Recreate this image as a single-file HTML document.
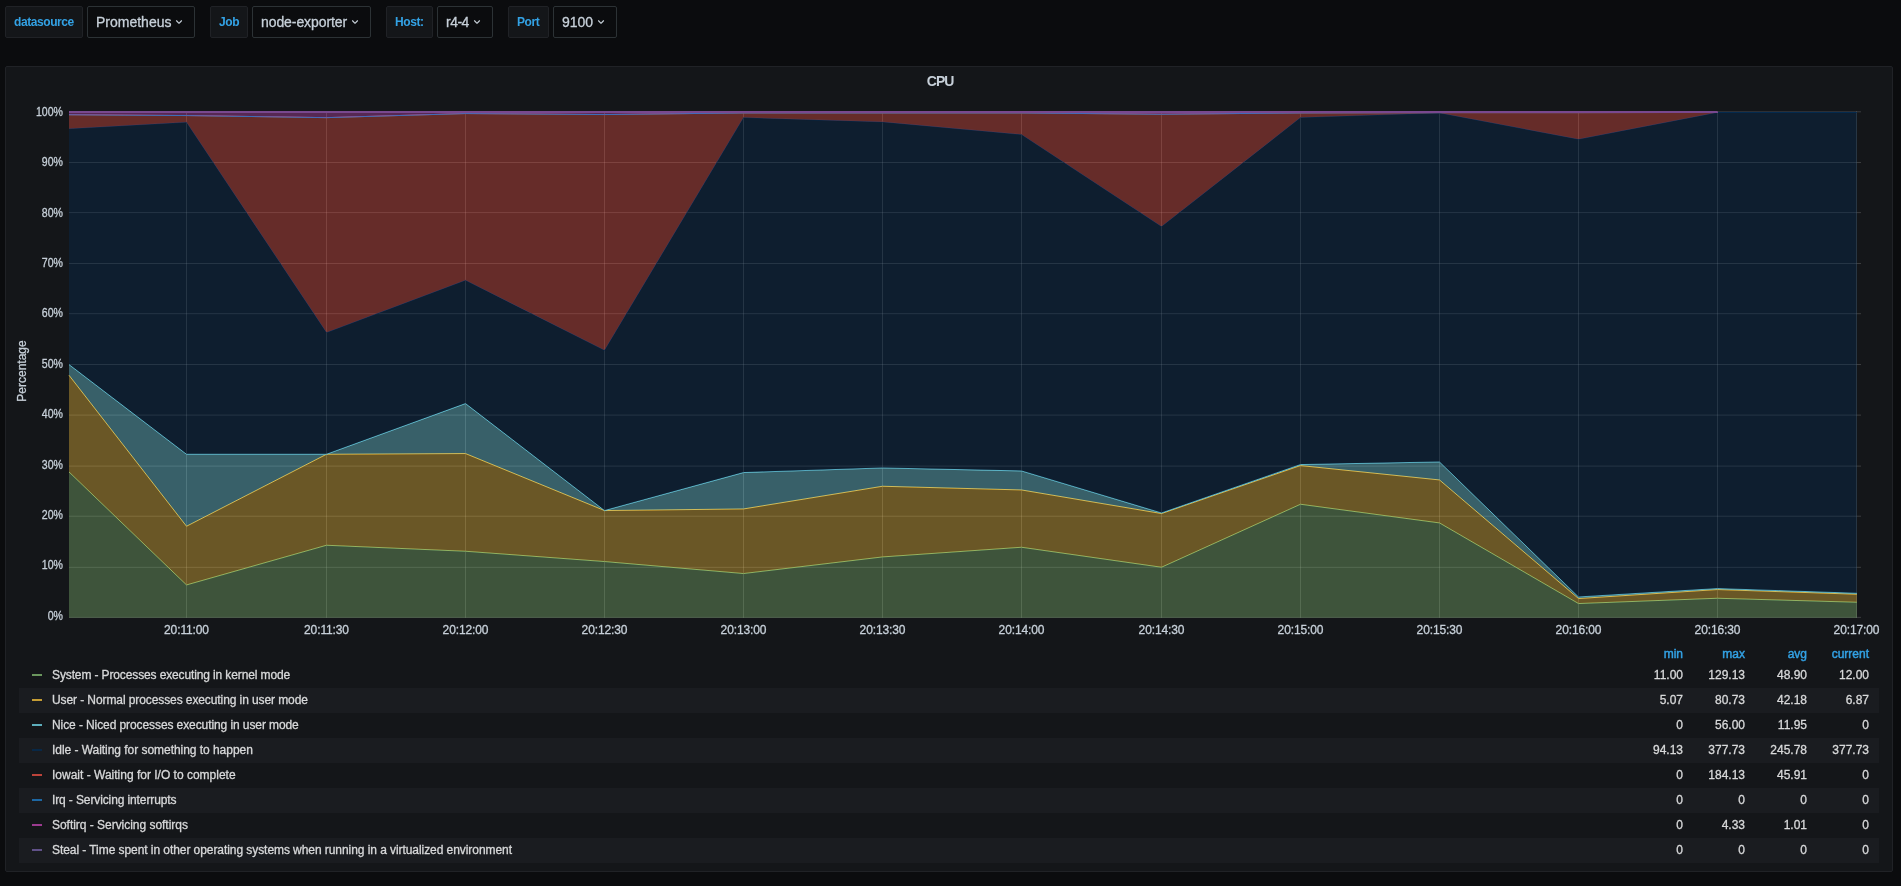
<!DOCTYPE html>
<html><head><meta charset="utf-8"><title>CPU</title>
<style>
*{box-sizing:border-box;margin:0;padding:0}
html,body{width:1901px;height:886px;overflow:hidden;background:#0b0c0e;font-family:"Liberation Sans",sans-serif;color:#c7d0d9}
body{position:relative}
.vlab,.vval{position:absolute;top:6px;height:32px;border-radius:2px;line-height:30px;white-space:nowrap}
.vlab{background:#141619;border:1px solid #202226;color:#33a2e5;font-size:12px;font-weight:bold;padding-left:8px;letter-spacing:-0.42px}
.vval{background:#0b0c0e;border:1px solid #2c3235;color:#c7d0d9;font-size:14px;padding-left:8px}
.vval svg{position:relative;top:1.8px;margin-left:1px}
.panel{position:absolute;left:5px;top:66px;width:1888px;height:806px;background:#141619;border:1px solid #202226;border-radius:2px}
.title{position:absolute;left:0;top:72px;width:1880px;text-align:center;font-size:14px;font-weight:bold;line-height:18px;color:#c7d0d9;letter-spacing:-1px;text-indent:0.3px}
.chart{position:absolute;left:0;top:0}
.yl{position:absolute;left:13px;width:50px;text-align:right;font-size:12px;line-height:16px;color:#c7d0d9;transform:scaleX(0.88);transform-origin:100% 50%}
.xl{position:absolute;top:621.5px;width:80px;text-align:center;font-size:12px;line-height:16px;color:#c7d0d9;letter-spacing:-0.12px}
.ylab{position:absolute;left:-28px;top:362.6px;width:100px;height:16px;text-align:center;font-size:12px;line-height:16px;transform:rotate(-90deg);color:#c7d0d9}
.lh{position:absolute;top:645.7px;-webkit-text-stroke:0.45px;width:80px;text-align:right;font-size:12px;line-height:16px;color:#33a2e5}
.lr{position:absolute;left:19px;width:1860px;height:25px;font-size:12px;line-height:25px;color:#d8d9da;white-space:nowrap}
.lr.stripe{background:#1a1c20}
.lr i{position:absolute;left:12.9px;top:11px;width:10.4px;height:2px;opacity:0.82}
.lr .ln{position:absolute;left:33px;top:-0.5px}
.lr .lv{position:absolute;top:-0.5px;width:80px;text-align:right}
.yl,.xl,.ylab,.lr,.vval span{-webkit-text-stroke:0.3px}
#w{position:absolute;left:0;top:0;width:1901px;height:886px;will-change:transform}
</style></head><body><div id="w">
<div class="vlab" style="left:5px;width:78px">datasource</div><div class="vval" style="left:87px;width:108px"><span style="letter-spacing:0px">Prometheus</span><svg width="14" height="14" viewBox="0 0 24 24"><path fill="#c7d0d9" d="M17,9.17a1,1,0,0,0-1.41,0L12,12.71,8.46,9.17a1,1,0,0,0-1.41,0,1,1,0,0,0,0,1.42l4.24,4.24a1,1,0,0,0,1.42,0L17,10.59A1,1,0,0,0,17,9.17Z"/></svg></div><div class="vlab" style="left:210px;width:38px">Job</div><div class="vval" style="left:252px;width:119px"><span style="letter-spacing:-0.08px">node-exporter</span><svg width="14" height="14" viewBox="0 0 24 24"><path fill="#c7d0d9" d="M17,9.17a1,1,0,0,0-1.41,0L12,12.71,8.46,9.17a1,1,0,0,0-1.41,0,1,1,0,0,0,0,1.42l4.24,4.24a1,1,0,0,0,1.42,0L17,10.59A1,1,0,0,0,17,9.17Z"/></svg></div><div class="vlab" style="left:386px;width:47px">Host:</div><div class="vval" style="left:437px;width:56px"><span style="letter-spacing:-0.5px">r4-4</span><svg width="14" height="14" viewBox="0 0 24 24"><path fill="#c7d0d9" d="M17,9.17a1,1,0,0,0-1.41,0L12,12.71,8.46,9.17a1,1,0,0,0-1.41,0,1,1,0,0,0,0,1.42l4.24,4.24a1,1,0,0,0,1.42,0L17,10.59A1,1,0,0,0,17,9.17Z"/></svg></div><div class="vlab" style="left:508px;width:41px">Port</div><div class="vval" style="left:553px;width:64px"><span style="letter-spacing:0px">9100</span><svg width="14" height="14" viewBox="0 0 24 24"><path fill="#c7d0d9" d="M17,9.17a1,1,0,0,0-1.41,0L12,12.71,8.46,9.17a1,1,0,0,0-1.41,0,1,1,0,0,0,0,1.42l4.24,4.24a1,1,0,0,0,1.42,0L17,10.59A1,1,0,0,0,17,9.17Z"/></svg></div>
<div class="panel"></div>
<div class="title">CPU</div>
<svg class="chart" width="1901" height="886" viewBox="0 0 1901 886"><g fill="#c8c8c8" fill-opacity="0.22"><rect x="186.0" y="111.3" width="1" height="506.5"/><rect x="326.0" y="111.3" width="1" height="506.5"/><rect x="465.0" y="111.3" width="1" height="506.5"/><rect x="604.0" y="111.3" width="1" height="506.5"/><rect x="743.0" y="111.3" width="1" height="506.5"/><rect x="882.0" y="111.3" width="1" height="506.5"/><rect x="1021.0" y="111.3" width="1" height="506.5"/><rect x="1161.0" y="111.3" width="1" height="506.5"/><rect x="1300.0" y="111.3" width="1" height="506.5"/><rect x="1439.0" y="111.3" width="1" height="506.5"/><rect x="1578.0" y="111.3" width="1" height="506.5"/><rect x="1717.0" y="111.3" width="1" height="506.5"/><rect x="1856.0" y="111.3" width="1" height="506.5"/><rect x="69" y="111.30" width="1792" height="1"/><rect x="69" y="162.00" width="1792" height="1"/><rect x="69" y="212.10" width="1792" height="1"/><rect x="69" y="263.00" width="1792" height="1"/><rect x="69" y="313.20" width="1792" height="1"/><rect x="69" y="364.00" width="1792" height="1"/><rect x="69" y="414.60" width="1792" height="1"/><rect x="69" y="465.60" width="1792" height="1"/><rect x="69" y="515.70" width="1792" height="1"/><rect x="69" y="566.80" width="1792" height="1"/><rect x="69" y="616.85" width="1792" height="1"/></g>
<polygon points="69.0,471.95 186.5,584.95 326.5,545.25 465.5,551.25 604.5,561.55 743.5,573.55 882.5,556.95 1021.5,547.25 1161.5,567.25 1300.5,504.25 1439.5,522.95 1578.5,603.55 1717.5,598.25 1856.9,602.25 1856.9,617.70 1717.5,617.70 1578.5,617.70 1439.5,617.70 1300.5,617.70 1161.5,617.70 1021.5,617.70 882.5,617.70 743.5,617.70 604.5,617.70 465.5,617.70 326.5,617.70 186.5,617.70 69.0,617.70" fill="#7EB26D" fill-opacity="0.4"/>
<polyline points="69.0,471.95 186.5,584.95 326.5,545.25 465.5,551.25 604.5,561.55 743.5,573.55 882.5,556.95 1021.5,547.25 1161.5,567.25 1300.5,504.25 1439.5,522.95 1578.5,603.55 1717.5,598.25 1856.9,602.25" fill="none" stroke="#7EB26D" stroke-width="1" stroke-linejoin="round"/>
<polygon points="69.0,375.25 186.5,526.25 326.5,454.25 465.5,453.55 604.5,510.55 743.5,508.95 882.5,486.25 1021.5,489.95 1161.5,513.55 1300.5,465.55 1439.5,479.95 1578.5,598.55 1717.5,589.55 1856.9,594.25 1856.9,602.25 1717.5,598.25 1578.5,603.55 1439.5,522.95 1300.5,504.25 1161.5,567.25 1021.5,547.25 882.5,556.95 743.5,573.55 604.5,561.55 465.5,551.25 326.5,545.25 186.5,584.95 69.0,471.95" fill="#EAB839" fill-opacity="0.4"/>
<polyline points="69.0,375.25 186.5,526.25 326.5,454.25 465.5,453.55 604.5,510.55 743.5,508.95 882.5,486.25 1021.5,489.95 1161.5,513.55 1300.5,465.55 1439.5,479.95 1578.5,598.55 1717.5,589.55 1856.9,594.25" fill="none" stroke="#EAB839" stroke-width="1" stroke-linejoin="round"/>
<polygon points="69.0,364.55 186.5,454.25 326.5,454.25 465.5,403.55 604.5,510.55 743.5,472.55 882.5,467.95 1021.5,470.95 1161.5,512.95 1300.5,464.55 1439.5,461.95 1578.5,596.95 1717.5,588.55 1856.9,593.25 1856.9,594.25 1717.5,589.55 1578.5,598.55 1439.5,479.95 1300.5,465.55 1161.5,513.55 1021.5,489.95 882.5,486.25 743.5,508.95 604.5,510.55 465.5,453.55 326.5,454.25 186.5,526.25 69.0,375.25" fill="#6ED0E0" fill-opacity="0.4"/>
<polyline points="69.0,364.55 186.5,454.25 326.5,454.25 465.5,403.55 604.5,510.55 743.5,472.55 882.5,467.95 1021.5,470.95 1161.5,512.95 1300.5,464.55 1439.5,461.95 1578.5,596.95 1717.5,588.55 1856.9,593.25" fill="none" stroke="#6ED0E0" stroke-width="1" stroke-linejoin="round"/>
<polygon points="69.0,128.75 186.5,122.25 326.5,332.55 465.5,280.25 604.5,350.25 743.5,117.55 882.5,121.95 1021.5,134.55 1161.5,226.55 1300.5,117.55 1439.5,112.95 1578.5,139.25 1717.5,112.45 1856.9,112.45 1856.9,593.25 1717.5,588.55 1578.5,596.95 1439.5,461.95 1300.5,464.55 1161.5,512.95 1021.5,470.95 882.5,467.95 743.5,472.55 604.5,510.55 465.5,403.55 326.5,454.25 186.5,454.25 69.0,364.55" fill="#052B51" fill-opacity="0.4"/>
<polyline points="69.0,128.75 186.5,122.25 326.5,332.55 465.5,280.25 604.5,350.25 743.5,117.55 882.5,121.95 1021.5,134.55 1161.5,226.55 1300.5,117.55 1439.5,112.95 1578.5,139.25 1717.5,112.45 1856.9,112.45" fill="none" stroke="#052B51" stroke-width="1" stroke-linejoin="round"/>
<polygon points="69.0,114.75 186.5,115.55 326.5,117.65 465.5,113.55 604.5,114.55 743.5,112.95 882.5,112.95 1021.5,112.95 1161.5,114.25 1300.5,112.95 1439.5,112.65 1578.5,112.65 1717.5,112.45 1717.5,112.45 1578.5,139.25 1439.5,112.95 1300.5,117.55 1161.5,226.55 1021.5,134.55 882.5,121.95 743.5,117.55 604.5,350.25 465.5,280.25 326.5,332.55 186.5,122.25 69.0,128.75" fill="#E24D42" fill-opacity="0.4"/>
<polyline points="69.0,114.75 186.5,115.55 326.5,117.65 465.5,113.55 604.5,114.55 743.5,112.95 882.5,112.95 1021.5,112.95 1161.5,114.25 1300.5,112.95 1439.5,112.65 1578.5,112.65 1717.5,112.45" fill="none" stroke="#E24D42" stroke-width="1" stroke-linejoin="round"/>
<polyline points="69.0,114.75 186.5,115.55 326.5,117.65 465.5,113.55 604.5,114.55 743.5,112.95 882.5,112.95 1021.5,112.95 1161.5,114.25 1300.5,112.95 1439.5,112.65 1578.5,112.65 1717.5,112.45" fill="none" stroke="#1F78C1" stroke-width="1" stroke-linejoin="round"/>
<polygon points="69.0,112.30 186.5,112.30 326.5,112.30 465.5,112.30 604.5,112.30 743.5,112.30 882.5,112.30 1021.5,112.30 1161.5,112.30 1300.5,112.30 1439.5,112.30 1578.5,112.30 1717.5,112.30 1717.5,112.45 1578.5,112.65 1439.5,112.65 1300.5,112.95 1161.5,114.25 1021.5,112.95 882.5,112.95 743.5,112.95 604.5,114.55 465.5,113.55 326.5,117.65 186.5,115.55 69.0,114.75" fill="#BA43A9" fill-opacity="0.4"/>
<polyline points="69.0,112.30 186.5,112.30 326.5,112.30 465.5,112.30 604.5,112.30 743.5,112.30 882.5,112.30 1021.5,112.30 1161.5,112.30 1300.5,112.30 1439.5,112.30 1578.5,112.30 1717.5,112.30" fill="none" stroke="#BA43A9" stroke-width="1" stroke-linejoin="round"/>
<polyline points="69.0,112.00 186.5,112.00 326.5,112.00 465.5,112.00 604.5,112.00 743.5,112.00 882.5,112.00 1021.5,112.00 1161.5,112.00 1300.5,112.00 1439.5,112.00 1578.5,112.00 1717.5,112.00" fill="none" stroke="#79488f" stroke-width="2" stroke-linecap="butt" stroke-linejoin="round"/></svg>
<div class="yl" style="top:103.8px">100%</div><div class="yl" style="top:154.2px">90%</div><div class="yl" style="top:204.6px">80%</div><div class="yl" style="top:255.0px">70%</div><div class="yl" style="top:305.4px">60%</div><div class="yl" style="top:355.8px">50%</div><div class="yl" style="top:406.2px">40%</div><div class="yl" style="top:456.6px">30%</div><div class="yl" style="top:507.0px">20%</div><div class="yl" style="top:557.4px">10%</div><div class="yl" style="top:607.8px">0%</div>
<div class="xl" style="left:146.5px">20:11:00</div><div class="xl" style="left:286.5px">20:11:30</div><div class="xl" style="left:425.5px">20:12:00</div><div class="xl" style="left:564.5px">20:12:30</div><div class="xl" style="left:703.5px">20:13:00</div><div class="xl" style="left:842.5px">20:13:30</div><div class="xl" style="left:981.5px">20:14:00</div><div class="xl" style="left:1121.5px">20:14:30</div><div class="xl" style="left:1260.5px">20:15:00</div><div class="xl" style="left:1399.5px">20:15:30</div><div class="xl" style="left:1538.5px">20:16:00</div><div class="xl" style="left:1677.5px">20:16:30</div><div class="xl" style="left:1816.5px">20:17:00</div>
<div class="ylab">Percentage</div>
<div class="lh" style="left:1603px">min</div><div class="lh" style="left:1665px">max</div><div class="lh" style="left:1727px">avg</div><div class="lh" style="left:1789px">current</div><div class="lr" style="top:663px"><i style="background:#7EB26D"></i><span class="ln" style="letter-spacing:-0.126px">System - Processes executing in kernel mode</span><span class="lv" style="left:1584px">11.00</span><span class="lv" style="left:1646px">129.13</span><span class="lv" style="left:1708px">48.90</span><span class="lv" style="left:1770px">12.00</span></div><div class="lr stripe" style="top:688px"><i style="background:#EAB839"></i><span class="ln" style="letter-spacing:-0.093px">User - Normal processes executing in user mode</span><span class="lv" style="left:1584px">5.07</span><span class="lv" style="left:1646px">80.73</span><span class="lv" style="left:1708px">42.18</span><span class="lv" style="left:1770px">6.87</span></div><div class="lr" style="top:713px"><i style="background:#6ED0E0"></i><span class="ln" style="letter-spacing:-0.091px">Nice - Niced processes executing in user mode</span><span class="lv" style="left:1584px">0</span><span class="lv" style="left:1646px">56.00</span><span class="lv" style="left:1708px">11.95</span><span class="lv" style="left:1770px">0</span></div><div class="lr stripe" style="top:738px"><i style="background:#052B51"></i><span class="ln" style="letter-spacing:-0.041px">Idle - Waiting for something to happen</span><span class="lv" style="left:1584px">94.13</span><span class="lv" style="left:1646px">377.73</span><span class="lv" style="left:1708px">245.78</span><span class="lv" style="left:1770px">377.73</span></div><div class="lr" style="top:763px"><i style="background:#E24D42"></i><span class="ln" style="letter-spacing:0px">Iowait - Waiting for I/O to complete</span><span class="lv" style="left:1584px">0</span><span class="lv" style="left:1646px">184.13</span><span class="lv" style="left:1708px">45.91</span><span class="lv" style="left:1770px">0</span></div><div class="lr stripe" style="top:788px"><i style="background:#1F78C1"></i><span class="ln" style="letter-spacing:-0.116px">Irq - Servicing interrupts</span><span class="lv" style="left:1584px">0</span><span class="lv" style="left:1646px">0</span><span class="lv" style="left:1708px">0</span><span class="lv" style="left:1770px">0</span></div><div class="lr" style="top:813px"><i style="background:#BA43A9"></i><span class="ln" style="letter-spacing:-0.03px">Softirq - Servicing softirqs</span><span class="lv" style="left:1584px">0</span><span class="lv" style="left:1646px">4.33</span><span class="lv" style="left:1708px">1.01</span><span class="lv" style="left:1770px">0</span></div><div class="lr stripe" style="top:838px"><i style="background:#705DA0"></i><span class="ln" style="letter-spacing:-0.065px">Steal - Time spent in other operating systems when running in a virtualized environment</span><span class="lv" style="left:1584px">0</span><span class="lv" style="left:1646px">0</span><span class="lv" style="left:1708px">0</span><span class="lv" style="left:1770px">0</span></div>
</div></body></html>
